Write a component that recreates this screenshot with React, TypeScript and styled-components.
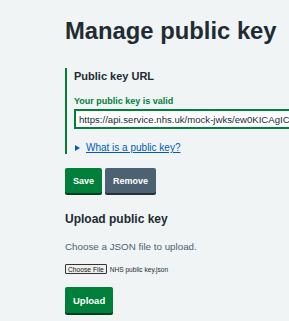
import React from "react";
import styled, { createGlobalStyle } from "styled-components";

const Global = createGlobalStyle`
  html, body {
    margin: 0;
    padding: 0;
    background: #f0f4f5;
    overflow: hidden;
  }
  body {
    font-family: "Liberation Sans", Arial, sans-serif;
    color: #212b32;
  }
`;

const Page = styled.main`
  width: 289px;
  height: 321px;
  overflow: hidden;
  padding-left: 65px;
  box-sizing: border-box;
`;

const Title = styled.h1`
  margin: 17px 0 0;
  font-size: 23.8px;
  line-height: 28px;
  font-weight: 700;
  white-space: nowrap;
`;

const Group = styled.section`
  margin-top: 23px;
  border-left: 2px solid #007f3b;
  padding: 1px 0 0 7px;
`;

const GroupTitle = styled.h2`
  margin: 0;
  font-size: 11px;
  line-height: 14px;
  font-weight: 700;
  white-space: nowrap;
`;

const ValidLabel = styled.label`
  display: block;
  margin-top: 12px;
  font-size: 9px;
  line-height: 12px;
  font-weight: 700;
  color: #007f3b;
  white-space: nowrap;
`;

const UrlInput = styled.input`
  display: block;
  margin: 2px 0 0;
  width: 260px;
  height: 20px;
  box-sizing: border-box;
  border: 2px solid #007f3b;
  background: #fff;
  padding: 0 3px;
  font-family: "Liberation Sans", Arial, sans-serif;
  font-size: 9.6px;
  color: #212b32;
  outline: none;
`;

const Details = styled.div`
  margin-top: 12px;
  display: flex;
  align-items: center;
  gap: 6px;
  height: 13px;
`;

const Arrow = styled.span`
  display: inline-block;
  width: 0;
  height: 0;
  margin-left: 1px;
  border-left: 5px solid #005eb8;
  border-top: 3.5px solid transparent;
  border-bottom: 3.5px solid transparent;
`;

const Link = styled.a`
  font-size: 10px;
  line-height: 13px;
  color: #005eb8;
  text-decoration: underline;
  white-space: nowrap;
`;

const ButtonRow = styled.div`
  display: flex;
  gap: 3px;
  margin-top: 14px;
`;

const Button = styled.button<{ $variant?: "primary" | "secondary"; $tall?: boolean }>`
  height: ${(p) => (p.$tall ? 26 : 25)}px;
  padding: 0 8px;
  border: none;
  border-radius: 2px;
  font-family: "Liberation Sans", Arial, sans-serif;
  font-weight: 700;
  font-size: ${(p) => (p.$tall ? 9.5 : 9)}px;
  color: #fff;
  background: ${(p) => (p.$variant === "secondary" ? "#4c6272" : "#007f3b")};
  box-shadow: 0 2px 0 ${(p) => (p.$variant === "secondary" ? "#263139" : "#00401e")};
  cursor: pointer;
`;

const SectionTitle = styled.h2`
  margin: 19px 0 0;
  font-size: 12px;
  line-height: 15px;
  font-weight: 700;
  white-space: nowrap;
`;

const Hint = styled.p`
  margin: 13px 0 0;
  font-size: 9.8px;
  line-height: 13px;
  color: #4c6272;
  white-space: nowrap;
`;

const FileRow = styled.div`
  margin-top: 11px;
  display: flex;
  align-items: center;
  gap: 3px;
  height: 10px;
`;

const FileButton = styled.span`
  display: inline-flex;
  align-items: center;
  height: 10px;
  box-sizing: border-box;
  padding: 0 2px;
  border: 1px solid #333;
  border-radius: 1px;
  background: #efefef;
  font-size: 6.7px;
  color: #111;
  white-space: nowrap;
`;

const FileName = styled.span`
  font-size: 6.6px;
  color: #212b32;
  white-space: nowrap;
`;

const UploadRow = styled.div`
  margin-top: 13px;
`;

export default function App() {
  return (
    <>
      <Global />
      <Page>
        <Title>Manage public key</Title>
        <Group>
          <GroupTitle>Public key URL</GroupTitle>
          <ValidLabel htmlFor="url">Your public key is valid</ValidLabel>
          <UrlInput
            id="url"
            readOnly
            value="https://api.service.nhs.uk/mock-jwks/ew0KICAgICJrZXlzIjogWwogICAgICAgIHsK"
          />
          <Details>
            <Arrow />
            <Link href="#">What is a public key?</Link>
          </Details>
        </Group>
        <ButtonRow>
          <Button $variant="primary">Save</Button>
          <Button $variant="secondary">Remove</Button>
        </ButtonRow>
        <SectionTitle>Upload public key</SectionTitle>
        <Hint>Choose a JSON file to upload.</Hint>
        <FileRow>
          <FileButton>Choose File</FileButton>
          <FileName>NHS public key.json</FileName>
        </FileRow>
        <UploadRow>
          <Button $variant="primary" $tall>
            Upload
          </Button>
        </UploadRow>
      </Page>
    </>
  );
}
